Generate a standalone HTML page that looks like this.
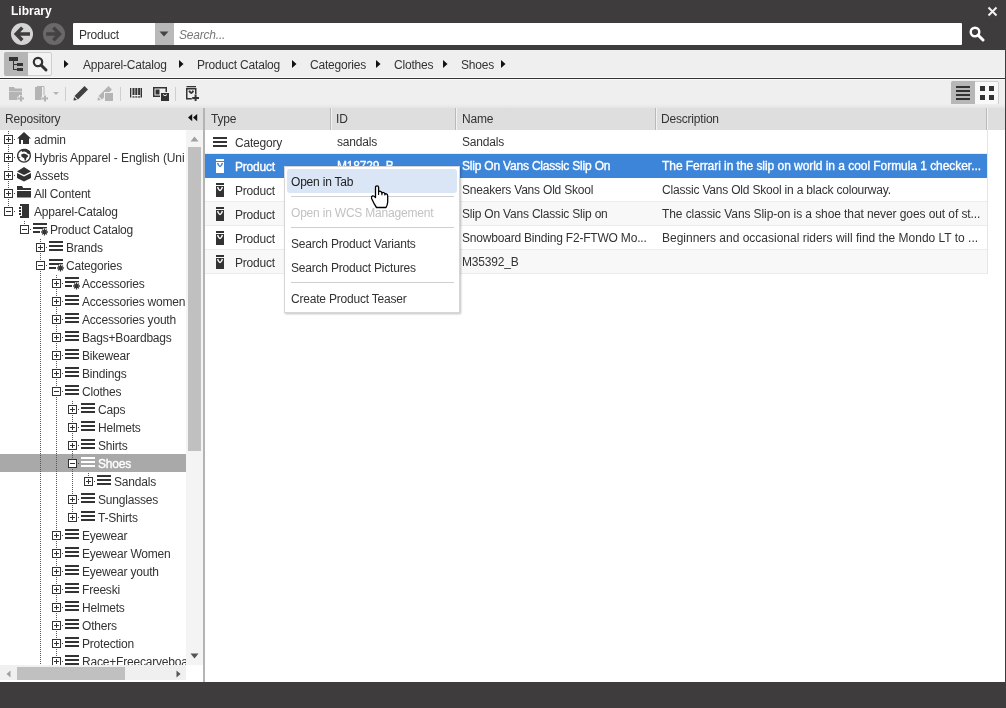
<!DOCTYPE html><html><head><meta charset='utf-8'><style>
*{margin:0;padding:0;box-sizing:border-box}
html,body{width:1006px;height:708px;overflow:hidden;background:#3e3c3d;font-family:"Liberation Sans",sans-serif;font-size:12px;color:#333}
.a{position:absolute}
.t{position:absolute;white-space:nowrap;will-change:transform;line-height:16px;font-size:12px;letter-spacing:-0.2px}
svg{position:absolute;display:block}
</style></head><body><div class="t" style="left:11px;top:3px;color:#fff;font-weight:bold;font-size:12px;letter-spacing:0">Library</div>
<svg style="left:987px;top:6px" width="11" height="11" viewBox="0 0 11 11"><path d="M1.5 1.5L9.5 9.5M9.5 1.5L1.5 9.5" stroke="#f2f2f2" stroke-width="2"/></svg>
<svg style="left:10px;top:22px" width="24" height="24" viewBox="0 0 24 24"><circle cx="12" cy="12" r="11" fill="#d4d4d4"/><path d="M12.3 5.6L6.2 11.9L12.3 18.2M7.5 11.9H20" stroke="#3e3c3d" stroke-width="3.5" fill="none"/></svg>
<svg style="left:42px;top:22px" width="24" height="24" viewBox="0 0 24 24"><circle cx="12" cy="12" r="11" fill="#6a6869"/><path d="M11.4 5.6L17.5 11.9L11.4 18.2M4.2 11.9H16.5" stroke="#444243" stroke-width="3.5" fill="none"/></svg>
<div class="a" style="left:73px;top:23px;width:889px;height:22px;background:#fff;border-radius:1px"></div>
<div class="t" style="left:79px;top:27px;color:#333;font-size:12px">Product</div>
<div class="a" style="left:155px;top:23px;width:19px;height:22px;background:#b9b9b9"></div>
<svg style="left:159px;top:31px" width="10" height="6" viewBox="0 0 10 6"><path d="M0.5 0.5H9.5L5 5.5Z" fill="#444"/></svg>
<div class="t" style="left:179px;top:27px;color:#777;font-style:italic;font-size:12px">Search...</div>
<svg style="left:969px;top:26px" width="16" height="16" viewBox="0 0 16 16"><circle cx="6" cy="6" r="4.3" stroke="#fff" stroke-width="2.4" fill="none"/><path d="M9 9L14 14" stroke="#fff" stroke-width="3" stroke-linecap="round"/></svg>
<div class="a" style="left:0;top:50px;width:1005px;height:632px;background:#efefef"></div>
<div class="a" style="left:0;top:77px;width:1005px;height:1px;background:#fafafa"></div>
<div class="a" style="left:0;top:78px;width:1005px;height:1px;background:#333"></div>
<div class="a" style="left:0;top:79px;width:1005px;height:1px;background:#fafafa"></div>
<div class="a" style="left:4px;top:52px;width:48px;height:24px;border:1px solid #cfcfcf;border-radius:2px;background:#f3f3f3"></div>
<div class="a" style="left:4px;top:52px;width:24px;height:24px;background:#b5b5b5;border-radius:2px 0 0 2px"></div>
<svg style="left:8px;top:56px" width="18" height="17" viewBox="0 0 18 17"><rect x="1" y="1" width="9" height="4" fill="#333"/><path d="M5.5 5V14M5 8.5H9M5 13.5H9" stroke="#333" stroke-width="1" fill="none"/><rect x="9" y="7" width="6" height="3" fill="#333"/><rect x="9" y="12" width="6" height="3" fill="#333"/></svg>
<svg style="left:31px;top:55px" width="18" height="18" viewBox="0 0 18 18"><circle cx="7" cy="7" r="4.2" stroke="#333" stroke-width="2.2" fill="none"/><path d="M10 10L15 15" stroke="#333" stroke-width="3" stroke-linecap="round"/></svg>
<svg style="left:64px;top:60px" width="5" height="8" viewBox="0 0 5 8"><path d="M0 0L4.5 4L0 8Z" fill="#111"/></svg>
<div class="t" style="left:83px;top:57px;color:#333">Apparel-Catalog</div>
<svg style="left:179px;top:60px" width="5" height="8" viewBox="0 0 5 8"><path d="M0 0L4.5 4L0 8Z" fill="#111"/></svg>
<div class="t" style="left:197px;top:57px;color:#333">Product Catalog</div>
<svg style="left:292px;top:60px" width="5" height="8" viewBox="0 0 5 8"><path d="M0 0L4.5 4L0 8Z" fill="#111"/></svg>
<div class="t" style="left:310px;top:57px;color:#333">Categories</div>
<svg style="left:376px;top:60px" width="5" height="8" viewBox="0 0 5 8"><path d="M0 0L4.5 4L0 8Z" fill="#111"/></svg>
<div class="t" style="left:394px;top:57px;color:#333">Clothes</div>
<svg style="left:443px;top:60px" width="5" height="8" viewBox="0 0 5 8"><path d="M0 0L4.5 4L0 8Z" fill="#111"/></svg>
<div class="t" style="left:461px;top:57px;color:#333">Shoes</div>
<svg style="left:501px;top:60px" width="5" height="8" viewBox="0 0 5 8"><path d="M0 0L4.5 4L0 8Z" fill="#111"/></svg>
<svg style="left:9px;top:86px" width="16" height="16" viewBox="0 0 16 16"><path d="M0 1H5L6 2.5H13V5H0Z" fill="#b4b4b4"/><rect x="0" y="5.5" width="13" height="8.5" fill="#b4b4b4"/><path d="M12 9V16M8.5 12.5H15.5" stroke="#efefef" stroke-width="4"/><path d="M12 9.5V15.5M9 12.5H15" stroke="#b4b4b4" stroke-width="2"/></svg>
<svg style="left:35px;top:86px" width="26" height="16" viewBox="0 0 26 16"><rect x="0" y="1" width="7" height="13" fill="#b4b4b4"/><path d="M2 0.5H9V10" stroke="#b4b4b4" stroke-width="1" fill="none"/><path d="M10 9V16M6.5 12.5H13.5" stroke="#efefef" stroke-width="4"/><path d="M10 9.5V15.5M7 12.5H13" stroke="#b4b4b4" stroke-width="2"/><path d="M18 6H24L21 9Z" fill="#b4b4b4"/></svg>
<div class="a" style="left:65px;top:87px;width:1px;height:14px;background:#cfcfcf"></div>
<svg style="left:73px;top:85px" width="16" height="16" viewBox="0 0 16 16"><path d="M11.5 1L15 4.5L5 14.5L1.5 11Z" fill="#404040"/><path d="M1 12L4 15L0.5 15.5Z" fill="#404040"/></svg>
<svg style="left:97px;top:85px" width="18" height="16" viewBox="0 0 18 16"><path d="M11.5 1L15 4.5L5 14.5L1.5 11Z" fill="#b4b4b4"/><path d="M1 12L4 15L0.5 15.5Z" fill="#b4b4b4"/><rect x="7" y="7" width="10" height="9" fill="#efefef"/><rect x="8" y="8" width="8" height="8" fill="#b4b4b4"/></svg>
<div class="a" style="left:120px;top:87px;width:1px;height:14px;background:#cfcfcf"></div>
<svg style="left:130px;top:88px" width="13" height="11" viewBox="0 0 13 11"><g fill="#333"><rect x="0" y="0" width="1.3" height="9.5"/><rect x="2.5" y="0" width="2" height="7"/><rect x="5.3" y="0" width="2" height="7"/><rect x="8.1" y="0" width="2" height="7"/><rect x="10.6" y="0" width="1.4" height="9.5"/><rect x="2.5" y="8.3" width="2" height="1.3"/><rect x="5.3" y="8.3" width="2" height="1.3"/><rect x="8.1" y="8.3" width="2" height="1.3"/></g></svg>
<svg style="left:153px;top:87px" width="16" height="14" viewBox="0 0 16 14"><path d="M0.75 0.75H13.25V9.25H0.75Z" stroke="#333" stroke-width="1.5" fill="none"/><rect x="2.5" y="2.5" width="4" height="5" fill="#333"/><rect x="7" y="5" width="9" height="9" fill="#efefef"/><rect x="8" y="6" width="8" height="8" fill="#333"/><path d="M10 7.5Q12 10 14 7.5" stroke="#efefef" stroke-width="1" fill="none"/></svg>
<div class="a" style="left:175px;top:87px;width:1px;height:14px;background:#cfcfcf"></div>
<svg style="left:186px;top:86px" width="15" height="15" viewBox="0 0 15 15"><rect x="0.5" y="0" width="9.5" height="1.3" fill="#333"/><path d="M0.75 2.75H9.75V12.75H0.75Z" stroke="#333" stroke-width="1.5" fill="none"/><path d="M3.2 4.6Q5.25 9.2 7.3 4.6" stroke="#333" stroke-width="2" fill="none"/><path d="M9.6 8.2V15M5.8 12H13.4" stroke="#efefef" stroke-width="3.6"/><path d="M9.6 8.6V15M6.2 11.9H13" stroke="#333" stroke-width="2"/></svg>
<div class="a" style="left:951px;top:81px;width:48px;height:24px;border:1px solid #d0d0d0;border-radius:2px;background:#f8f8f8"></div>
<div class="a" style="left:951px;top:81px;width:24px;height:24px;background:#b7b7b7;border-radius:2px 0 0 2px"></div>
<svg style="left:956px;top:86px" width="14" height="15" viewBox="0 0 14 15"><g fill="#333"><rect x="0" y="0" width="14" height="2"/><rect x="0" y="4" width="14" height="2"/><rect x="0" y="8" width="14" height="2"/><rect x="0" y="12" width="14" height="2"/></g></svg>
<svg style="left:980px;top:86px" width="15" height="15" viewBox="0 0 15 15"><g fill="#333"><rect x="0" y="0" width="5" height="5"/><rect x="9" y="0" width="5" height="5"/><rect x="0" y="9" width="5" height="5"/><rect x="9" y="9" width="5" height="5"/></g></svg>
<div class="a" style="left:0;top:104px;width:1005px;height:4px;background:linear-gradient(#efefef,#e4e4e4)"></div>
<div class="a" style="left:0;top:108px;width:203px;height:22px;background:#dedede"></div>
<div class="t" style="left:5px;top:111px">Repository</div>
<svg style="left:188px;top:114px" width="10" height="8" viewBox="0 0 10 8"><path d="M4.2 0L0 3.6L4.2 7.2ZM9.2 0L5 3.6L9.2 7.2Z" fill="#111"/></svg>
<div class="a" style="left:0;top:130px;width:203px;height:552px;background:#fff"></div>
<div class="a" style="left:0;top:130px;width:186px;height:535px;overflow:hidden">
<div class="a" style="left:0;top:324px;width:186px;height:18px;background:#a9a9a9"></div>
<div class="a" style="left:8px;top:0px;width:1px;height:81px;background:repeating-linear-gradient(transparent 0 1px,#555 1px 2px)"></div>
<div class="a" style="left:24px;top:90px;width:1px;height:9px;background:repeating-linear-gradient(transparent 0 1px,#555 1px 2px)"></div>
<div class="a" style="left:40px;top:108px;width:1px;height:462px;background:repeating-linear-gradient(transparent 0 1px,#555 1px 2px)"></div>
<div class="a" style="left:56px;top:144px;width:1px;height:426px;background:repeating-linear-gradient(transparent 0 1px,#555 1px 2px)"></div>
<div class="a" style="left:72px;top:270px;width:1px;height:118px;background:repeating-linear-gradient(transparent 0 1px,#555 1px 2px)"></div>
<div class="a" style="left:88px;top:342px;width:1px;height:10px;background:repeating-linear-gradient(transparent 0 1px,#555 1px 2px)"></div>
<div class="a" style="left:14px;top:9px;width:1px;height:1px;background:#444"></div>
<div class="a" style="left:4px;top:5px;width:9px;height:9px;border:1px solid #333;background:#fff"></div>
<div class="a" style="left:6px;top:9px;width:5px;height:1px;background:#333"></div>
<div class="a" style="left:8px;top:7px;width:1px;height:5px;background:#333"></div>
<svg style="left:17px;top:2px" width="14" height="12" viewBox="0 0 14 12"><path d="M7 0L14 6.5H12V12H6V8H4V12H2V6.5H0Z" fill="#333"/></svg>
<div class="t" style="left:34px;top:2px;color:#333">admin</div>
<div class="a" style="left:14px;top:27px;width:1px;height:1px;background:#444"></div>
<div class="a" style="left:4px;top:23px;width:9px;height:9px;border:1px solid #333;background:#fff"></div>
<div class="a" style="left:6px;top:27px;width:5px;height:1px;background:#333"></div>
<div class="a" style="left:8px;top:25px;width:1px;height:5px;background:#333"></div>
<svg style="left:17px;top:18px" width="15" height="16" viewBox="0 0 15 16"><circle cx="7" cy="7.8" r="6.35" stroke="#333" stroke-width="1.4" fill="none"/><path d="M4.5 1.5L9 0.8L13 3L13.5 5.5L11 6L9 4L7 3.5L5 4Z M4.1 6.6L7 5.6L10.7 6.9L11 8.7L9.5 9.7L8.9 12.2L7.9 13L7.2 10.2L4.6 8.7Z M1 8.9L3.6 9.2L1.8 10.5Z" fill="#333"/></svg>
<div class="t" style="left:34px;top:20px;color:#333;letter-spacing:-0.1px">Hybris Apparel - English (Uni</div>
<div class="a" style="left:14px;top:45px;width:1px;height:1px;background:#444"></div>
<div class="a" style="left:4px;top:41px;width:9px;height:9px;border:1px solid #333;background:#fff"></div>
<div class="a" style="left:6px;top:45px;width:5px;height:1px;background:#333"></div>
<div class="a" style="left:8px;top:43px;width:1px;height:5px;background:#333"></div>
<svg style="left:17px;top:36px" width="14" height="16" viewBox="0 0 14 16"><path d="M7 1L14 5.5L7 9L0 5.5Z" fill="#333"/><path d="M0 7L7 10.5L14 7V12L7 15.5L0 12Z" fill="#333"/></svg>
<div class="t" style="left:34px;top:38px;color:#333">Assets</div>
<div class="a" style="left:14px;top:63px;width:1px;height:1px;background:#444"></div>
<div class="a" style="left:4px;top:59px;width:9px;height:9px;border:1px solid #333;background:#fff"></div>
<div class="a" style="left:6px;top:63px;width:5px;height:1px;background:#333"></div>
<div class="a" style="left:8px;top:61px;width:1px;height:5px;background:#333"></div>
<svg style="left:17px;top:54px" width="14" height="16" viewBox="0 0 14 16"><path d="M0 2H5L6 3.5V4H0Z" fill="#333"/><rect x="0" y="4" width="14" height="2" fill="#333"/><rect x="0" y="7" width="14" height="6.5" fill="#333"/></svg>
<div class="t" style="left:34px;top:56px;color:#333">All Content</div>
<div class="a" style="left:14px;top:81px;width:1px;height:1px;background:#444"></div>
<div class="a" style="left:4px;top:77px;width:9px;height:9px;border:1px solid #333;background:#fff"></div>
<div class="a" style="left:6px;top:81px;width:5px;height:1px;background:#333"></div>
<svg style="left:17px;top:72px" width="14" height="18" viewBox="0 0 14 18"><g fill="#333"><rect x="3" y="2" width="9" height="2"/><rect x="3" y="14" width="9" height="2"/><rect x="5" y="2" width="7" height="14"/><rect x="2" y="5" width="2" height="2"/><rect x="2" y="8" width="2" height="2"/><rect x="2" y="11" width="2" height="2"/></g></svg>
<div class="t" style="left:34px;top:74px;color:#333">Apparel-Catalog</div>
<div class="a" style="left:30px;top:99px;width:1px;height:1px;background:#444"></div>
<div class="a" style="left:20px;top:95px;width:9px;height:9px;border:1px solid #333;background:#fff"></div>
<div class="a" style="left:22px;top:99px;width:5px;height:1px;background:#333"></div>
<svg style="left:33px;top:90px" width="17" height="17" viewBox="0 0 17 17"><g fill="#333"><rect x="0" y="3" width="14" height="2"/><rect x="0" y="7" width="10" height="2"/><rect x="10" y="7" width="4" height="1.3"/><rect x="0" y="11" width="7" height="2"/></g><path d="M11.5 8.6V15.4M8.1 12H14.9M9.1 9.6L13.9 14.4M13.9 9.6L9.1 14.4" stroke="#333" stroke-width="1.3"/><circle cx="11.5" cy="12" r="1.3" fill="#333"/></svg>
<div class="t" style="left:50px;top:92px;color:#333">Product Catalog</div>
<div class="a" style="left:46px;top:117px;width:1px;height:1px;background:#444"></div>
<div class="a" style="left:36px;top:113px;width:9px;height:9px;border:1px solid #333;background:#fff"></div>
<div class="a" style="left:38px;top:117px;width:5px;height:1px;background:#333"></div>
<div class="a" style="left:40px;top:115px;width:1px;height:5px;background:#333"></div>
<svg style="left:49px;top:111px" width="14" height="10" viewBox="0 0 14 10"><g fill="#333"><rect x="0" y="0" width="14" height="2"/><rect x="0" y="4" width="14" height="2"/><rect x="0" y="8" width="14" height="2"/></g></svg>
<div class="t" style="left:66px;top:110px;color:#333">Brands</div>
<div class="a" style="left:46px;top:135px;width:1px;height:1px;background:#444"></div>
<div class="a" style="left:36px;top:131px;width:9px;height:9px;border:1px solid #333;background:#fff"></div>
<div class="a" style="left:38px;top:135px;width:5px;height:1px;background:#333"></div>
<svg style="left:49px;top:126px" width="17" height="17" viewBox="0 0 17 17"><g fill="#333"><rect x="0" y="3" width="14" height="2"/><rect x="0" y="7" width="10" height="2"/><rect x="10" y="7" width="4" height="1.3"/><rect x="0" y="11" width="7" height="2"/></g><path d="M11.5 8.6V15.4M8.1 12H14.9M9.1 9.6L13.9 14.4M13.9 9.6L9.1 14.4" stroke="#333" stroke-width="1.3"/><circle cx="11.5" cy="12" r="1.3" fill="#333"/></svg>
<div class="t" style="left:66px;top:128px;color:#333">Categories</div>
<div class="a" style="left:62px;top:153px;width:1px;height:1px;background:#444"></div>
<div class="a" style="left:52px;top:149px;width:9px;height:9px;border:1px solid #333;background:#fff"></div>
<div class="a" style="left:54px;top:153px;width:5px;height:1px;background:#333"></div>
<div class="a" style="left:56px;top:151px;width:1px;height:5px;background:#333"></div>
<svg style="left:65px;top:144px" width="17" height="17" viewBox="0 0 17 17"><g fill="#333"><rect x="0" y="3" width="14" height="2"/><rect x="0" y="7" width="10" height="2"/><rect x="10" y="7" width="4" height="1.3"/><rect x="0" y="11" width="7" height="2"/></g><path d="M11.5 8.6V15.4M8.1 12H14.9M9.1 9.6L13.9 14.4M13.9 9.6L9.1 14.4" stroke="#333" stroke-width="1.3"/><circle cx="11.5" cy="12" r="1.3" fill="#333"/></svg>
<div class="t" style="left:82px;top:146px;color:#333">Accessories</div>
<div class="a" style="left:62px;top:171px;width:1px;height:1px;background:#444"></div>
<div class="a" style="left:52px;top:167px;width:9px;height:9px;border:1px solid #333;background:#fff"></div>
<div class="a" style="left:54px;top:171px;width:5px;height:1px;background:#333"></div>
<div class="a" style="left:56px;top:169px;width:1px;height:5px;background:#333"></div>
<svg style="left:65px;top:165px" width="14" height="10" viewBox="0 0 14 10"><g fill="#333"><rect x="0" y="0" width="14" height="2"/><rect x="0" y="4" width="14" height="2"/><rect x="0" y="8" width="14" height="2"/></g></svg>
<div class="t" style="left:82px;top:164px;color:#333">Accessories women</div>
<div class="a" style="left:62px;top:189px;width:1px;height:1px;background:#444"></div>
<div class="a" style="left:52px;top:185px;width:9px;height:9px;border:1px solid #333;background:#fff"></div>
<div class="a" style="left:54px;top:189px;width:5px;height:1px;background:#333"></div>
<div class="a" style="left:56px;top:187px;width:1px;height:5px;background:#333"></div>
<svg style="left:65px;top:183px" width="14" height="10" viewBox="0 0 14 10"><g fill="#333"><rect x="0" y="0" width="14" height="2"/><rect x="0" y="4" width="14" height="2"/><rect x="0" y="8" width="14" height="2"/></g></svg>
<div class="t" style="left:82px;top:182px;color:#333">Accessories youth</div>
<div class="a" style="left:62px;top:207px;width:1px;height:1px;background:#444"></div>
<div class="a" style="left:52px;top:203px;width:9px;height:9px;border:1px solid #333;background:#fff"></div>
<div class="a" style="left:54px;top:207px;width:5px;height:1px;background:#333"></div>
<div class="a" style="left:56px;top:205px;width:1px;height:5px;background:#333"></div>
<svg style="left:65px;top:201px" width="14" height="10" viewBox="0 0 14 10"><g fill="#333"><rect x="0" y="0" width="14" height="2"/><rect x="0" y="4" width="14" height="2"/><rect x="0" y="8" width="14" height="2"/></g></svg>
<div class="t" style="left:82px;top:200px;color:#333">Bags+Boardbags</div>
<div class="a" style="left:62px;top:225px;width:1px;height:1px;background:#444"></div>
<div class="a" style="left:52px;top:221px;width:9px;height:9px;border:1px solid #333;background:#fff"></div>
<div class="a" style="left:54px;top:225px;width:5px;height:1px;background:#333"></div>
<div class="a" style="left:56px;top:223px;width:1px;height:5px;background:#333"></div>
<svg style="left:65px;top:219px" width="14" height="10" viewBox="0 0 14 10"><g fill="#333"><rect x="0" y="0" width="14" height="2"/><rect x="0" y="4" width="14" height="2"/><rect x="0" y="8" width="14" height="2"/></g></svg>
<div class="t" style="left:82px;top:218px;color:#333">Bikewear</div>
<div class="a" style="left:62px;top:243px;width:1px;height:1px;background:#444"></div>
<div class="a" style="left:52px;top:239px;width:9px;height:9px;border:1px solid #333;background:#fff"></div>
<div class="a" style="left:54px;top:243px;width:5px;height:1px;background:#333"></div>
<div class="a" style="left:56px;top:241px;width:1px;height:5px;background:#333"></div>
<svg style="left:65px;top:237px" width="14" height="10" viewBox="0 0 14 10"><g fill="#333"><rect x="0" y="0" width="14" height="2"/><rect x="0" y="4" width="14" height="2"/><rect x="0" y="8" width="14" height="2"/></g></svg>
<div class="t" style="left:82px;top:236px;color:#333">Bindings</div>
<div class="a" style="left:62px;top:261px;width:1px;height:1px;background:#444"></div>
<div class="a" style="left:52px;top:257px;width:9px;height:9px;border:1px solid #333;background:#fff"></div>
<div class="a" style="left:54px;top:261px;width:5px;height:1px;background:#333"></div>
<svg style="left:65px;top:255px" width="14" height="10" viewBox="0 0 14 10"><g fill="#333"><rect x="0" y="0" width="14" height="2"/><rect x="0" y="4" width="14" height="2"/><rect x="0" y="8" width="14" height="2"/></g></svg>
<div class="t" style="left:82px;top:254px;color:#333">Clothes</div>
<div class="a" style="left:78px;top:279px;width:1px;height:1px;background:#444"></div>
<div class="a" style="left:68px;top:275px;width:9px;height:9px;border:1px solid #333;background:#fff"></div>
<div class="a" style="left:70px;top:279px;width:5px;height:1px;background:#333"></div>
<div class="a" style="left:72px;top:277px;width:1px;height:5px;background:#333"></div>
<svg style="left:81px;top:273px" width="14" height="10" viewBox="0 0 14 10"><g fill="#333"><rect x="0" y="0" width="14" height="2"/><rect x="0" y="4" width="14" height="2"/><rect x="0" y="8" width="14" height="2"/></g></svg>
<div class="t" style="left:98px;top:272px;color:#333">Caps</div>
<div class="a" style="left:78px;top:297px;width:1px;height:1px;background:#444"></div>
<div class="a" style="left:68px;top:293px;width:9px;height:9px;border:1px solid #333;background:#fff"></div>
<div class="a" style="left:70px;top:297px;width:5px;height:1px;background:#333"></div>
<div class="a" style="left:72px;top:295px;width:1px;height:5px;background:#333"></div>
<svg style="left:81px;top:291px" width="14" height="10" viewBox="0 0 14 10"><g fill="#333"><rect x="0" y="0" width="14" height="2"/><rect x="0" y="4" width="14" height="2"/><rect x="0" y="8" width="14" height="2"/></g></svg>
<div class="t" style="left:98px;top:290px;color:#333">Helmets</div>
<div class="a" style="left:78px;top:315px;width:1px;height:1px;background:#444"></div>
<div class="a" style="left:68px;top:311px;width:9px;height:9px;border:1px solid #333;background:#fff"></div>
<div class="a" style="left:70px;top:315px;width:5px;height:1px;background:#333"></div>
<div class="a" style="left:72px;top:313px;width:1px;height:5px;background:#333"></div>
<svg style="left:81px;top:309px" width="14" height="10" viewBox="0 0 14 10"><g fill="#333"><rect x="0" y="0" width="14" height="2"/><rect x="0" y="4" width="14" height="2"/><rect x="0" y="8" width="14" height="2"/></g></svg>
<div class="t" style="left:98px;top:308px;color:#333">Shirts</div>
<div class="a" style="left:78px;top:333px;width:1px;height:1px;background:#444"></div>
<div class="a" style="left:68px;top:329px;width:9px;height:9px;border:1px solid #333;background:#fff"></div>
<div class="a" style="left:70px;top:333px;width:5px;height:1px;background:#333"></div>
<svg style="left:81px;top:327px" width="14" height="10" viewBox="0 0 14 10"><g fill="#fff"><rect x="0" y="0" width="14" height="2"/><rect x="0" y="4" width="14" height="2"/><rect x="0" y="8" width="14" height="2"/></g></svg>
<div class="t" style="left:98px;top:326px;color:#fff;-webkit-text-stroke:0.35px #fff">Shoes</div>
<div class="a" style="left:94px;top:351px;width:1px;height:1px;background:#444"></div>
<div class="a" style="left:84px;top:347px;width:9px;height:9px;border:1px solid #333;background:#fff"></div>
<div class="a" style="left:86px;top:351px;width:5px;height:1px;background:#333"></div>
<div class="a" style="left:88px;top:349px;width:1px;height:5px;background:#333"></div>
<svg style="left:97px;top:345px" width="14" height="10" viewBox="0 0 14 10"><g fill="#333"><rect x="0" y="0" width="14" height="2"/><rect x="0" y="4" width="14" height="2"/><rect x="0" y="8" width="14" height="2"/></g></svg>
<div class="t" style="left:114px;top:344px;color:#333">Sandals</div>
<div class="a" style="left:78px;top:369px;width:1px;height:1px;background:#444"></div>
<div class="a" style="left:68px;top:365px;width:9px;height:9px;border:1px solid #333;background:#fff"></div>
<div class="a" style="left:70px;top:369px;width:5px;height:1px;background:#333"></div>
<div class="a" style="left:72px;top:367px;width:1px;height:5px;background:#333"></div>
<svg style="left:81px;top:363px" width="14" height="10" viewBox="0 0 14 10"><g fill="#333"><rect x="0" y="0" width="14" height="2"/><rect x="0" y="4" width="14" height="2"/><rect x="0" y="8" width="14" height="2"/></g></svg>
<div class="t" style="left:98px;top:362px;color:#333">Sunglasses</div>
<div class="a" style="left:78px;top:387px;width:1px;height:1px;background:#444"></div>
<div class="a" style="left:68px;top:383px;width:9px;height:9px;border:1px solid #333;background:#fff"></div>
<div class="a" style="left:70px;top:387px;width:5px;height:1px;background:#333"></div>
<div class="a" style="left:72px;top:385px;width:1px;height:5px;background:#333"></div>
<svg style="left:81px;top:381px" width="14" height="10" viewBox="0 0 14 10"><g fill="#333"><rect x="0" y="0" width="14" height="2"/><rect x="0" y="4" width="14" height="2"/><rect x="0" y="8" width="14" height="2"/></g></svg>
<div class="t" style="left:98px;top:380px;color:#333">T-Shirts</div>
<div class="a" style="left:62px;top:405px;width:1px;height:1px;background:#444"></div>
<div class="a" style="left:52px;top:401px;width:9px;height:9px;border:1px solid #333;background:#fff"></div>
<div class="a" style="left:54px;top:405px;width:5px;height:1px;background:#333"></div>
<div class="a" style="left:56px;top:403px;width:1px;height:5px;background:#333"></div>
<svg style="left:65px;top:399px" width="14" height="10" viewBox="0 0 14 10"><g fill="#333"><rect x="0" y="0" width="14" height="2"/><rect x="0" y="4" width="14" height="2"/><rect x="0" y="8" width="14" height="2"/></g></svg>
<div class="t" style="left:82px;top:398px;color:#333">Eyewear</div>
<div class="a" style="left:62px;top:423px;width:1px;height:1px;background:#444"></div>
<div class="a" style="left:52px;top:419px;width:9px;height:9px;border:1px solid #333;background:#fff"></div>
<div class="a" style="left:54px;top:423px;width:5px;height:1px;background:#333"></div>
<div class="a" style="left:56px;top:421px;width:1px;height:5px;background:#333"></div>
<svg style="left:65px;top:417px" width="14" height="10" viewBox="0 0 14 10"><g fill="#333"><rect x="0" y="0" width="14" height="2"/><rect x="0" y="4" width="14" height="2"/><rect x="0" y="8" width="14" height="2"/></g></svg>
<div class="t" style="left:82px;top:416px;color:#333">Eyewear Women</div>
<div class="a" style="left:62px;top:441px;width:1px;height:1px;background:#444"></div>
<div class="a" style="left:52px;top:437px;width:9px;height:9px;border:1px solid #333;background:#fff"></div>
<div class="a" style="left:54px;top:441px;width:5px;height:1px;background:#333"></div>
<div class="a" style="left:56px;top:439px;width:1px;height:5px;background:#333"></div>
<svg style="left:65px;top:435px" width="14" height="10" viewBox="0 0 14 10"><g fill="#333"><rect x="0" y="0" width="14" height="2"/><rect x="0" y="4" width="14" height="2"/><rect x="0" y="8" width="14" height="2"/></g></svg>
<div class="t" style="left:82px;top:434px;color:#333">Eyewear youth</div>
<div class="a" style="left:62px;top:459px;width:1px;height:1px;background:#444"></div>
<div class="a" style="left:52px;top:455px;width:9px;height:9px;border:1px solid #333;background:#fff"></div>
<div class="a" style="left:54px;top:459px;width:5px;height:1px;background:#333"></div>
<div class="a" style="left:56px;top:457px;width:1px;height:5px;background:#333"></div>
<svg style="left:65px;top:453px" width="14" height="10" viewBox="0 0 14 10"><g fill="#333"><rect x="0" y="0" width="14" height="2"/><rect x="0" y="4" width="14" height="2"/><rect x="0" y="8" width="14" height="2"/></g></svg>
<div class="t" style="left:82px;top:452px;color:#333">Freeski</div>
<div class="a" style="left:62px;top:477px;width:1px;height:1px;background:#444"></div>
<div class="a" style="left:52px;top:473px;width:9px;height:9px;border:1px solid #333;background:#fff"></div>
<div class="a" style="left:54px;top:477px;width:5px;height:1px;background:#333"></div>
<div class="a" style="left:56px;top:475px;width:1px;height:5px;background:#333"></div>
<svg style="left:65px;top:471px" width="14" height="10" viewBox="0 0 14 10"><g fill="#333"><rect x="0" y="0" width="14" height="2"/><rect x="0" y="4" width="14" height="2"/><rect x="0" y="8" width="14" height="2"/></g></svg>
<div class="t" style="left:82px;top:470px;color:#333">Helmets</div>
<div class="a" style="left:62px;top:495px;width:1px;height:1px;background:#444"></div>
<div class="a" style="left:52px;top:491px;width:9px;height:9px;border:1px solid #333;background:#fff"></div>
<div class="a" style="left:54px;top:495px;width:5px;height:1px;background:#333"></div>
<div class="a" style="left:56px;top:493px;width:1px;height:5px;background:#333"></div>
<svg style="left:65px;top:489px" width="14" height="10" viewBox="0 0 14 10"><g fill="#333"><rect x="0" y="0" width="14" height="2"/><rect x="0" y="4" width="14" height="2"/><rect x="0" y="8" width="14" height="2"/></g></svg>
<div class="t" style="left:82px;top:488px;color:#333">Others</div>
<div class="a" style="left:62px;top:513px;width:1px;height:1px;background:#444"></div>
<div class="a" style="left:52px;top:509px;width:9px;height:9px;border:1px solid #333;background:#fff"></div>
<div class="a" style="left:54px;top:513px;width:5px;height:1px;background:#333"></div>
<div class="a" style="left:56px;top:511px;width:1px;height:5px;background:#333"></div>
<svg style="left:65px;top:507px" width="14" height="10" viewBox="0 0 14 10"><g fill="#333"><rect x="0" y="0" width="14" height="2"/><rect x="0" y="4" width="14" height="2"/><rect x="0" y="8" width="14" height="2"/></g></svg>
<div class="t" style="left:82px;top:506px;color:#333">Protection</div>
<div class="a" style="left:62px;top:531px;width:1px;height:1px;background:#444"></div>
<div class="a" style="left:52px;top:527px;width:9px;height:9px;border:1px solid #333;background:#fff"></div>
<div class="a" style="left:54px;top:531px;width:5px;height:1px;background:#333"></div>
<div class="a" style="left:56px;top:529px;width:1px;height:5px;background:#333"></div>
<svg style="left:65px;top:525px" width="14" height="10" viewBox="0 0 14 10"><g fill="#333"><rect x="0" y="0" width="14" height="2"/><rect x="0" y="4" width="14" height="2"/><rect x="0" y="8" width="14" height="2"/></g></svg>
<div class="t" style="left:82px;top:524px;color:#333">Race+Freecarveboards</div>
</div>
<div class="a" style="left:186px;top:130px;width:17px;height:535px;background:#f4f4f4"></div>
<svg style="left:190px;top:136px" width="9" height="6" viewBox="0 0 9 6"><path d="M0.5 5.5L4.5 0.5L8.5 5.5Z" fill="#a0a0a0"/></svg>
<div class="a" style="left:188px;top:147px;width:13px;height:304px;background:#c0c0c0"></div>
<svg style="left:190px;top:653px" width="9" height="6" viewBox="0 0 9 6"><path d="M0.5 0.5L4.5 5.5L8.5 0.5Z" fill="#555"/></svg>
<div class="a" style="left:0;top:665px;width:186px;height:15px;background:#f0f0f0"></div>
<svg style="left:6px;top:670px" width="5" height="8" viewBox="0 0 5 8"><path d="M4.5 0.5L0.5 4L4.5 7.5Z" fill="#a0a0a0"/></svg>
<div class="a" style="left:17px;top:667px;width:108px;height:13px;background:#c0c0c0"></div>
<svg style="left:176px;top:670px" width="5" height="8" viewBox="0 0 5 8"><path d="M0.5 0.5L4.5 4L0.5 7.5Z" fill="#555"/></svg>
<div class="a" style="left:186px;top:665px;width:17px;height:17px;background:#fff"></div>
<div class="a" style="left:0;top:680px;width:203px;height:2px;background:#fff"></div>
<div class="a" style="left:203px;top:108px;width:2px;height:574px;background:#b4b4b4"></div>
<div class="a" style="left:205px;top:108px;width:800px;height:22px;background:#dedede"></div>
<div class="a" style="left:205px;top:130px;width:800px;height:552px;background:#fff"></div>
<div class="a" style="left:330px;top:108px;width:1px;height:22px;background:#b9b9b9"></div>
<div class="a" style="left:331px;top:108px;width:1px;height:22px;background:#f2f2f2"></div>
<div class="a" style="left:455px;top:108px;width:1px;height:22px;background:#b9b9b9"></div>
<div class="a" style="left:456px;top:108px;width:1px;height:22px;background:#f2f2f2"></div>
<div class="a" style="left:655px;top:108px;width:1px;height:22px;background:#b9b9b9"></div>
<div class="a" style="left:656px;top:108px;width:1px;height:22px;background:#f2f2f2"></div>
<div class="a" style="left:986px;top:108px;width:1px;height:22px;background:#b9b9b9"></div>
<div class="a" style="left:987px;top:108px;width:1px;height:22px;background:#f2f2f2"></div>
<div class="t" style="left:211px;top:111px">Type</div>
<div class="t" style="left:336px;top:111px">ID</div>
<div class="t" style="left:462px;top:111px">Name</div>
<div class="t" style="left:661px;top:111px">Description</div>
<div class="a" style="left:205px;top:130px;width:783px;height:24px;background:#fff"></div>
<div class="a" style="left:205px;top:153px;width:783px;height:1px;background:#ececec"></div>
<svg style="left:213px;top:137px" width="14" height="10" viewBox="0 0 14 10"><g fill="#333"><rect x="0" y="0" width="14" height="2"/><rect x="0" y="4" width="14" height="2"/><rect x="0" y="8" width="14" height="2"/></g></svg>
<div class="t" style="left:235px;top:135px;color:#333">Category</div>
<div class="t" style="left:337px;top:134px;color:#333">sandals</div>
<div class="t" style="left:462px;top:134px;color:#333">Sandals</div>
<div class="t" style="left:662px;top:134px;color:#333"></div>
<div class="a" style="left:205px;top:154px;width:783px;height:24px;background:#3c85d8"></div>
<svg style="left:216px;top:159px" width="8" height="14" viewBox="0 0 8 14"><rect x="0" y="0" width="8" height="2" fill="#fff"/><rect x="0" y="3" width="8" height="11" fill="#fff"/><path d="M1.6 4.1Q4 10.8 6.4 4.1" stroke="#3c85d8" stroke-width="1.4" fill="none"/></svg>
<div class="t" style="left:235px;top:159px;color:#fff;-webkit-text-stroke:0.35px #fff">Product</div>
<div class="t" style="left:337px;top:158px;color:#fff;-webkit-text-stroke:0.35px #fff">M18729_B</div>
<div class="t" style="left:462px;top:158px;color:#fff;-webkit-text-stroke:0.35px #fff">Slip On Vans Classic Slip On</div>
<div class="t" style="left:662px;top:158px;color:#fff;-webkit-text-stroke:0.35px #fff;letter-spacing:-0.05px">The Ferrari in the slip on world in a cool Formula 1 checker...</div>
<div class="a" style="left:205px;top:178px;width:783px;height:24px;background:#fff"></div>
<div class="a" style="left:205px;top:201px;width:783px;height:1px;background:#ececec"></div>
<svg style="left:216px;top:183px" width="8" height="14" viewBox="0 0 8 14"><rect x="0" y="0" width="8" height="2" fill="#333"/><rect x="0" y="3" width="8" height="11" fill="#333"/><path d="M1.6 4.1Q4 10.8 6.4 4.1" stroke="#fff" stroke-width="1.4" fill="none"/></svg>
<div class="t" style="left:235px;top:183px;color:#333">Product</div>
<div class="t" style="left:337px;top:182px;color:#333">M18730_B</div>
<div class="t" style="left:462px;top:182px;color:#333">Sneakers Vans Old Skool</div>
<div class="t" style="left:662px;top:182px;color:#333">Classic Vans Old Skool in a black colourway.</div>
<div class="a" style="left:205px;top:202px;width:783px;height:24px;background:#f8f8f8"></div>
<div class="a" style="left:205px;top:225px;width:783px;height:1px;background:#ececec"></div>
<svg style="left:216px;top:207px" width="8" height="14" viewBox="0 0 8 14"><rect x="0" y="0" width="8" height="2" fill="#333"/><rect x="0" y="3" width="8" height="11" fill="#333"/><path d="M1.6 4.1Q4 10.8 6.4 4.1" stroke="#f8f8f8" stroke-width="1.4" fill="none"/></svg>
<div class="t" style="left:235px;top:207px;color:#333">Product</div>
<div class="t" style="left:337px;top:206px;color:#333">M35392_C</div>
<div class="t" style="left:462px;top:206px;color:#333">Slip On Vans Classic Slip on</div>
<div class="t" style="left:662px;top:206px;color:#333;letter-spacing:-0.09px">The classic Vans Slip-on is a shoe that never goes out of st...</div>
<div class="a" style="left:205px;top:226px;width:783px;height:24px;background:#fff"></div>
<div class="a" style="left:205px;top:249px;width:783px;height:1px;background:#ececec"></div>
<svg style="left:216px;top:231px" width="8" height="14" viewBox="0 0 8 14"><rect x="0" y="0" width="8" height="2" fill="#333"/><rect x="0" y="3" width="8" height="11" fill="#333"/><path d="M1.6 4.1Q4 10.8 6.4 4.1" stroke="#fff" stroke-width="1.4" fill="none"/></svg>
<div class="t" style="left:235px;top:231px;color:#333">Product</div>
<div class="t" style="left:337px;top:230px;color:#333">M35392_A</div>
<div class="t" style="left:462px;top:230px;color:#333">Snowboard Binding F2-FTWO Mo...</div>
<div class="t" style="left:662px;top:230px;color:#333;letter-spacing:-0.005px">Beginners and occasional riders will find the Mondo LT to ...</div>
<div class="a" style="left:205px;top:250px;width:783px;height:24px;background:#f8f8f8"></div>
<div class="a" style="left:205px;top:273px;width:783px;height:1px;background:#ececec"></div>
<svg style="left:216px;top:255px" width="8" height="14" viewBox="0 0 8 14"><rect x="0" y="0" width="8" height="2" fill="#333"/><rect x="0" y="3" width="8" height="11" fill="#333"/><path d="M1.6 4.1Q4 10.8 6.4 4.1" stroke="#f8f8f8" stroke-width="1.4" fill="none"/></svg>
<div class="t" style="left:235px;top:255px;color:#333">Product</div>
<div class="t" style="left:337px;top:254px;color:#333">M35392_B</div>
<div class="t" style="left:462px;top:254px;color:#333">M35392_B</div>
<div class="t" style="left:662px;top:254px;color:#333"></div>
<div class="a" style="left:987px;top:130px;width:1px;height:144px;background:#e6e6e6"></div>
<div class="a" style="left:284px;top:166px;width:176px;height:147px;background:#fff;border:1px solid #d6d6d6;box-shadow:1px 1px 2px rgba(0,0,0,0.25)"></div>
<div class="a" style="left:287px;top:169px;width:170px;height:24px;background:#dae5f6;border-radius:3px"></div>
<div class="t" style="left:291px;top:174px;color:#222">Open in Tab</div>
<div class="t" style="left:291px;top:205px;color:#c2c2c2">Open in WCS Management</div>
<div class="t" style="left:291px;top:236px;color:#333">Search Product Variants</div>
<div class="t" style="left:291px;top:260px;color:#333">Search Product Pictures</div>
<div class="t" style="left:291px;top:291px;color:#333">Create Product Teaser</div>
<div class="a" style="left:291px;top:196px;width:163px;height:1px;background:#cfcfcf"></div>
<div class="a" style="left:291px;top:227px;width:163px;height:1px;background:#cfcfcf"></div>
<div class="a" style="left:291px;top:282px;width:163px;height:1px;background:#cfcfcf"></div>
<svg style="left:370px;top:185px" width="20" height="24" viewBox="0 0 20 24"><path d="M5.5 12.5V2.5Q5.5 0.9 7.05 0.9Q8.6 0.9 8.6 2.5V6.8Q9.5 6 10.5 6.3Q11.7 6.6 11.9 8Q12.6 7.2 13.6 7.5Q14.8 7.9 14.9 9.2Q15.6 8.5 16.5 8.9Q17.7 9.4 17.7 11V17Q17.5 20 16 22.5H6.5Q4 19 1.6 13.5Q1 11.5 2.5 10.8Q4 10.6 5.5 12.5Z" fill="#fff" stroke="#000" stroke-width="1.3" stroke-linejoin="round"/><path d="M8.6 6.8V10M11.9 8V10.3M14.9 9.2V10.6" stroke="#000" stroke-width="1.1"/></svg>
<div class="a" style="left:1005px;top:50px;width:1px;height:632px;background:#3e3c3d"></div></body></html>
